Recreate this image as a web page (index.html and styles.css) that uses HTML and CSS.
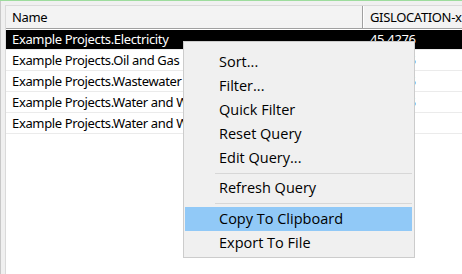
FILE: index.html
```html
<!DOCTYPE html>
<html lang="en">
<head>
  <meta charset="UTF-8">
  <title>Query Results</title>
  <link rel="stylesheet" href="styles.css">
</head>
<body>
  <div class="window">
    <div class="grid">
      <div class="grid-header">
        <div class="cell col-name">Name</div>
        <div class="cell col-loc">GISLOCATION-x</div>
      </div>
      <div class="row selected">
        <div class="cell col-name">Example Projects.Electricity</div>
        <div class="cell col-loc">45.4276</div>
      </div>
      <div class="row">
        <div class="cell col-name">Example Projects.Oil and Gas</div>
        <div class="cell col-loc">45.4125</div>
      </div>
      <div class="row">
        <div class="cell col-name">Example Projects.Wastewater</div>
        <div class="cell col-loc">45.4315</div>
      </div>
      <div class="row">
        <div class="cell col-name">Example Projects.Water and Wastewater</div>
        <div class="cell col-loc">45.4205</div>
      </div>
      <div class="row">
        <div class="cell col-name">Example Projects.Water and Wastewater</div>
        <div class="cell col-loc">45.41</div>
      </div>
    </div>

    <div class="context-menu">
      <div class="menu-item">Sort...</div>
      <div class="menu-item">Filter...</div>
      <div class="menu-item">Quick Filter</div>
      <div class="menu-item">Reset Query</div>
      <div class="menu-item">Edit Query...</div>
      <div class="menu-sep"></div>
      <div class="menu-item">Refresh Query</div>
      <div class="menu-sep sep-wide"></div>
      <div class="menu-item active">Copy To Clipboard</div>
      <div class="menu-item">Export To File</div>
    </div>
  </div>
</body>
</html>
```

FILE: styles.css
```css
html, body {
  margin: 0;
  padding: 0;
  height: 100%;
  overflow: hidden;
}

body {
  background: #f0f0f0;
  font-family: "Noto Sans", "Open Sans", sans-serif;
  border-top: 1px solid #9ddc9d;
  box-sizing: border-box;
}

.window {
  position: relative;
  height: 100%;
  border-left: 1px solid #c8c8c8;
  padding: 4px 0 0 4px;
  box-sizing: border-box;
}

.grid {
  background: #fff;
  height: 100%;
  border-top: 1px solid #dadada;
  border-left: 1px solid #dadada;
  font-size: 13px;
  letter-spacing: -0.35px;
  color: #000;
}

.grid-header {
  display: flex;
  height: 22px;
  background: #f3f3f3;
  border-bottom: 1px solid #a0a0a0;
}

.grid-header .col-name {
  border-right: 1px solid #a0a0a0;
  box-shadow: 1px 0 0 #fff;
}

.cell {
  line-height: 20px;
  padding-left: 6px;
  white-space: nowrap;
  overflow: hidden;
  box-sizing: border-box;
}

.grid-header .cell {
  line-height: 22px;
}

.col-name {
  width: 357px;
  flex: none;
}

.col-loc {
  flex: 1;
  padding-left: 7px;
}

.row {
  display: flex;
  height: 20px;
  border-bottom: 1px solid #ebebeb;
}

.row.selected {
  margin-top: 1px;
  height: 19px;
  background: #000;
  color: #fff;
}

.row.selected .cell {
  line-height: 19px;
}

.context-menu {
  position: absolute;
  left: 182px;
  top: 40px;
  width: 232px;
  background: #f0f0f0;
  border: 1px solid #cccccc;
  padding: 8px 0 2px 0;
  box-sizing: border-box;
  font-family: "Open Sans", "Noto Sans", sans-serif;
  font-size: 14.5px;
  color: #000;
}

.menu-item {
  height: 24px;
  line-height: 24px;
  padding-left: 34px;
  margin: 0 2px 0 1px;
  white-space: nowrap;
}

.menu-item.active {
  background: #91c9f7;
}

.menu-sep {
  height: 6px;
  margin-left: 31px;
  margin-right: 2px;
  display: flex;
  align-items: center;
}

.menu-sep::before {
  content: "";
  flex: 1;
  border-top: 1px solid #d7d7d7;
}

.sep-wide {
  height: 7px;
}
```
